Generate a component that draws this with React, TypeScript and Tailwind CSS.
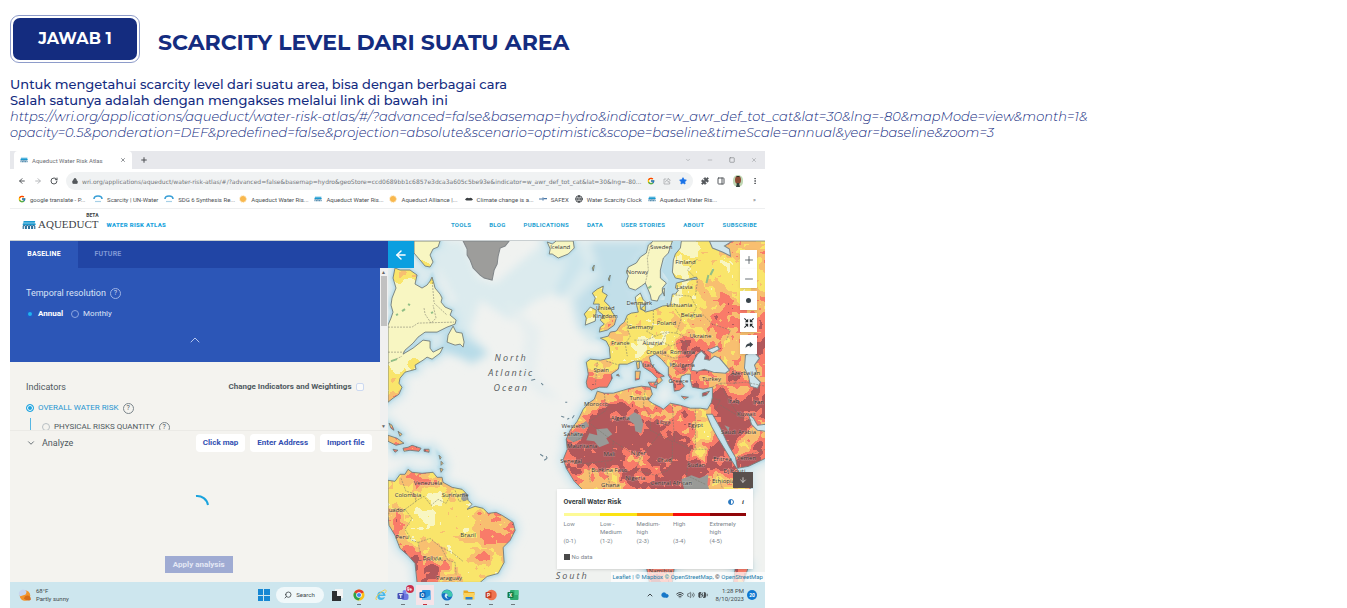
import React from "react";
import {
  ArrowLeft,
  ArrowRight,
  ChevronDown,
  ChevronUp,
  Minus,
  MoreVertical,
  Plus,
  RotateCw,
  Search,
  Square,
  Star,
  Lock,
  Puzzle,
  PanelRight,
  Wifi,
  Volume2,
  BatteryCharging,
  Cloud,
  X,
  ArrowDown,
  Globe,
} from "lucide-react";
import { FcGoogle } from "react-icons/fc";

/* ---------- Map data ---------- */

const NORTH_AMERICA =
  "M395 268L400 270L410 270L417 275L415 284L422 288L427 285L430 281L432 277L434 284L435 288L440 294L442 298L441 302L445 307L452 310L450 315L456 320L455 324L447 327L437 332L425 332L418 337L413 343L405 350L403 354L413 348L423 340L430 341L430 348L433 352L443 347L440 353L432 359L427 357L423 360L415 365L416 369L405 372L400 378L399 383L402 387L399 394L393 398L388 402L388 325L391 318L393 312L391 305L392 298L396 288L393 278Z";
const BAFFIN = "M414 241L440 241L438 247L433 249L430 255L433 262L430 267L425 266L420 260L414 253Z";
const NEWFOUNDLAND = "M453 326L456 332L462 333L464 342L463 347L460 344L455 345L447 342L448 335Z";
const GREENLAND = "M463 241L509 241L505 246L500 248L498 256L497 264L494 270L492 280L484 278L480 275L473 268L470 260L467 255L467 249Z";
const ICELAND = "M547 242L552 244L556 241L573 241L574 248L568 254L558 258L552 254L549 254L550 249Z";
const CARIBBEAN =
  "M388 435L397 438L404 443L396 445L388 441ZM403 448L408 447L412 445L421 448L419 451L410 450L404 451ZM424 449L429 449L429 452L424 451ZM393 449L398 450L395 452ZM389 423L392 425L394 430L391 428ZM398 431L402 434L400 436ZM439 455L441 457L440 459ZM441 461L443 463L441 465ZM440 468L443 469L441 472Z";
const SOUTH_AMERICA =
  "M388 480L395 481L400 474L405 474L408 469L412 472L422 473L433 472L437 477L442 477L443 482L452 487L462 489L467 494L468 500L472 504L467 509L475 506L483 508L488 513L496 512L502 515L513 522L515 530L510 540L503 547L504 562L498 573L487 576L480 582L417 582L415 563L408 555L400 548L395 535L389 525L388 515Z";
const SCANDINAVIA =
  "M653 241L648 245L646 253L640 257L636 263L628 267L626 272L628 276L626 282L629 288L635 290L641 286L645 283L648 290L650 295L651 300L657 301L659 296L662 293L662 288L666 283L660 278L660 270L663 258L668 253L672 241Z";
const AFRO_EURASIA =
  "M681 241L680 248L675 254L673 260L672 272L675 278L685 280L696 277L697 279L688 280L676 283L675 288L678 290L675 294L672 294L670 305L662 306L653 310L645 312L641 308L647 303L643 300L640 293L635 297L636 304L638 312L631 313L627 315L624 322L620 325L616 331L610 332L608 336L600 338L606 341L609 347L610 358L600 360L590 359L586 362L588 374L586 382L587 387L591 390L599 387L607 387L612 378L611 374L618 369L619 364L627 364L634 361L641 361L643 367L651 372L657 378L654 385L659 383L662 380L660 377L664 376L657 371L651 364L649 357L655 354L661 359L668 367L668 375L673 383L674 391L679 390L684 386L680 380L681 376L686 374L690 374L690 380L692 387L703 389L712 387L712 397L711 402L707 409L700 408L690 408L680 405L670 403L663 409L660 407L652 403L648 400L652 394L650 387L641 386L630 388L613 393L604 393L597 391L594 399L587 404L583 409L577 421L570 430L566 439L567 449L563 459L566 468L574 481L583 490L590 500L740 500L750 488L749 476L740 474L731 460L725 450L717 437L711 426L706 414L712 414L720 428L728 445L735 457L737 468L748 466L765 458L765 241Z";
const BRITAIN =
  "M597 289L603 286L602 292L607 295L604 301L609 306L612 312L616 318L614 325L607 330L599 332L600 327L604 324L600 320L603 315L598 311L599 304L593 304L595 298L592 293ZM590 307L596 310L595 321L585 325L586 318L584 314Z";
const ISLANDS =
  "M635 371L640 371L639 379L635 380ZM636 362L639 361L639 368L637 369ZM648 382L657 382L656 388L650 386ZM702 393L709 391L706 395L702 396ZM681 396L688 397L684 399ZM616 375L618 374L619 376ZM662 290L664 288L664 296ZM640 304L645 304L645 311L640 309ZM592 268L594 265L593 271ZM608 279L610 275L609 281Z";
const SOUTH_ATLANTIC_COASTS = "M646 566L674 566L672 582L649 582ZM735 566L748 566L743 582L733 582Z";

const LAND = [
  NORTH_AMERICA,
  BAFFIN,
  NEWFOUNDLAND,
  ICELAND,
  CARIBBEAN,
  SOUTH_AMERICA,
  SCANDINAVIA,
  AFRO_EURASIA,
  BRITAIN,
  ISLANDS,
  SOUTH_ATLANTIC_COASTS,
].join("");

const INLAND_SEAS =
  "M691 370L693 361L697 354L701 351L705 355L704 359L709 360L714 356L719 358L725 365L729 370L725 373L713 372L704 369L697 371ZM707 350L717 346L719 349L712 353ZM745 355L753 351L759 358L754 365L756 371L754 376L760 382L757 388L750 386L748 376L744 368ZM748 414L753 418L757 425L765 424L765 431L757 430L751 424ZM709 241L712 248L722 252L730 256L729 249L724 246L732 241Z";

const BORDERS =
  "M388 327L412 327L418 323L454 322M424 308L425 314L431 323L436 318L433 305M432 279L434 303L447 315M388 352L404 352M388 363L402 356M401 478L406 491L414 493L416 501L405 509L412 518L405 529L412 540L418 542L420 552M415 501L424 496L431 505L438 499L446 503L452 492M455 490L459 501L466 500M418 542L430 538L441 547L448 560L455 562L456 574M388 514L394 508L403 510M420 560L432 560L447 560M441 547L452 552L463 561M651 243L647 258L648 270L645 283M627 318L627 329L630 336L625 344L627 356M606 361L619 365M597 362L595 386M653 310L653 325L646 331L655 336L666 332L676 333L681 318L675 309M634 340L646 340L655 336M646 341L656 346L662 342L666 333M676 333L683 336L688 349L695 355M662 342L670 346L683 341M661 354L674 358L689 356M672 367L680 373L689 368M675 295L690 296L696 307L691 318L703 315L712 324L730 330L726 340M697 281L695 296M697 259L687 270L697 280M712 387L720 383L735 383L737 372L729 368M720 383L728 400L740 417L752 420M735 383L745 382L765 386M712 398L720 400L714 411M720 405L740 417M645 387L643 406L650 415L650 430L672 441L672 462M672 404L674 441L690 449L708 449M695 407L695 449M604 393L606 410L588 422L588 434L572 442M588 422L613 441L612 460L586 463L572 463M613 441L640 458L662 430M640 458L635 470L655 475L668 470L672 456M588 463L590 482M605 463L610 487M690 449L686 475L705 484M717 474L722 488M734 384L733 371M740 457L765 449";

const NO_DATA =
  "M586 440L589 433L597 435L596 429L607 428L612 434L606 438L609 443L599 447L594 441ZM567 438L575 431L583 434L581 439L573 442ZM626 418L634 412L640 415L643 424L641 433L635 431L634 424ZM681 479L691 475L699 478L708 474L707 484L710 492L684 490ZM462 493L468 492L471 498L464 501L461 499ZM579 425L586 421L589 426L583 429ZM724 425L729 427L728 431ZM669 362L673 364L670 367Z";

/* Reference stations: x, y, risk level (0 = low, 4 and above = extremely high). */
const STATIONS: number[][] = [
  [415, 300, -0.4], [435, 310, -0.4], [440, 320, -0.4], [400, 310, -0.4], [405, 330, -0.4], [405, 345, -0.3], [425, 350, -0.3],
  [390, 345, -0.3], [392, 385, 1.2], [402, 271, 1.3], [415, 271, 1.8], [409, 283, 0], [398, 300, -0.3],
  [402, 364, 0.3], [412, 366, 0.5], [390, 398, 1.8], [425, 250, -0.4], [455, 338, -0.3], [560, 248, 0],
  [395, 440, 2.2], [412, 448, 3],
  [410, 480, 1.9], [422, 476, 2.9], [436, 476, 2.2], [395, 490, 1.2], [425, 510, 0.8], [430, 496, 0.5], [450, 520, 0.9], [462, 527, 0.8],
  [440, 535, 0.9], [415, 530, 0.9], [470, 512, 1], [445, 508, 0.9], [400, 500, 1],
  [395, 512, 1.6], [391, 523, 2.9], [398, 542, 2.4], [408, 555, 3.3], [415, 575, 3.7], [430, 572, 3.6], [428, 547, 2], [436, 556, 2.1],
  [450, 575, 1.6], [472, 545, 1.2], [480, 520, 1.7], [498, 520, 2.6], [492, 534, 3], [485, 555, 2.7], [508, 526, 2.6], [497, 563, 1.1],
  [470, 570, 1], [460, 555, 1.2], [485, 572, 1.2],
  [640, 270, -0.3], [655, 255, -0.3], [652, 285, 0], [685, 262, 0.4], [690, 250, 0.2], [700, 260, 0.9], [720, 265, 1.1], [745, 270, 1.1],
  [730, 285, 1.1], [755, 250, 2], [762, 262, 1.8], [730, 246, 2.7], [680, 290, 0.5], [690, 300, 0.9], [706, 290, 1.9], [712, 300, 1.9],
  [722, 320, 2.8], [745, 295, 1.3], [735, 315, 2.8], [750, 330, 2.7], [760, 350, 3.6], [704, 320, 1.9], [690, 325, 1.5], [665, 318, 1.3],
  [645, 325, 0.9], [632, 320, 0.8], [660, 337, 0.6], [635, 348, 0.5], [645, 345, 0.5], [623, 328, 1.9], [615, 350, 1.3], [620, 357, 0.7],
  [600, 368, 1.2], [605, 380, 2.8], [592, 378, 2.7], [594, 365, 1],
  [645, 367, 2.6], [655, 374, 2.9], [670, 357, 1.2], [685, 350, 3], [680, 365, 3], [677, 382, 3], [700, 380, 3.1],
  [715, 378, 2.4], [730, 350, 2.1], [740, 365, 1.9], [735, 382, 3], [720, 396, 4.2], [728, 405, 4.3], [740, 408, 4.3], [755, 397, 3.6],
  [732, 390, 2.6], [603, 310, 0.8], [613, 321, 2.3], [590, 316, 0.4],
  [594, 402, 2.1], [610, 396, 1.9], [625, 393, 1.9], [645, 400, 1.8], [579, 417, 1.9],
  [600, 413, 4.4], [615, 407, 3.7], [632, 415, 4.1], [595, 430, 4.5], [595, 450, 4.5], [575, 448, 4.4], [615, 436, 4.5], [632, 440, 4.5],
  [648, 422, 3.1], [660, 412, 3], [664, 426, 3.5], [682, 415, 3], [685, 428, 3.1], [696, 415, 3], [653, 437, 4.3], [670, 448, 4.6],
  [702, 438, 1.2], [704, 427, 1], [698, 411, 2], [685, 445, 4.5], [650, 452, 4.4], [667, 464, 3.6], [690, 462, 4.3], [712, 450, 4.5],
  [718, 462, 4.2], [712, 474, 3], [720, 485, 2], [733, 485, 1.7], [702, 450, 2], [645, 457, 3], [630, 468, 3.3], [610, 460, 4.4],
  [610, 476, 2.1], [590, 477, 2], [575, 463, 3.8], [635, 478, 3.2], [650, 478, 3.6], [665, 478, 3.9], [675, 468, 4.3],
  [724, 428, 4.5], [730, 440, 4.1], [742, 443, 1.6], [752, 437, 1.5], [742, 425, 4], [757, 447, 3.2], [745, 460, 4.3], [739, 452, 2.6],
  [660, 575, 3], [740, 575, 3],
];

const RISK_COLOURS = ["#f8f6c2", "#f9e56b", "#f8bf70", "#f97b69", "#b2585b"];

function hash(x: number, y: number) {
  const s = Math.sin(x * 127.1 + y * 311.7) * 43758.5453;
  return s - Math.floor(s);
}

function noise(x: number, y: number, size: number) {
  const gx = Math.floor(x / size);
  const gy = Math.floor(y / size);
  const fx = x / size - gx;
  const fy = y / size - gy;
  const top = hash(gx, gy) * (1 - fx) + hash(gx + 1, gy) * fx;
  const bottom = hash(gx, gy + 1) * (1 - fx) + hash(gx + 1, gy + 1) * fx;
  return top * (1 - fy) + bottom * fy - 0.5;
}

function riskLevel(x: number, y: number) {
  let total = 0;
  let weight = 0;
  for (const [sx, sy, level] of STATIONS) {
    const d = (sx - x) ** 2 + (sy - y) ** 2 + 8;
    const w = 1 / (d * d);
    total += w * level;
    weight += w;
  }
  const base = total / weight;
  const rough = base < 0.3 ? 0.4 : base < 1.3 ? 0.8 : 1.3;
  const value = base + rough * (noise(x, y, 9) * 1.4 + noise(x + 900, y, 4) * 1.4);
  return Math.max(0, Math.min(4, Math.round(value)));
}

function buildRiskPaths() {
  const paths = ["", "", "", "", ""];
  const cell = 1;
  for (let y = 241; y < 583; y += cell) {
    let start = 388;
    let current = riskLevel(start, y);
    for (let x = 388 + cell; x <= 766; x += cell) {
      const next = x >= 766 ? -1 : riskLevel(x, y);
      if (next !== current) {
        paths[current] += `M${start} ${y}H${x}V${y + cell}H${start}Z`;
        start = x;
        current = next;
      }
    }
  }
  return paths;
}

const RISK_PATHS = buildRiskPaths();

const PLACES: [string, number, number][] = [
  ["Iceland", 560, 249], ["Sweden", 661, 249], ["Finland", 685, 264], ["Norway", 637, 274], ["Denmark", 639, 305],
  ["Latvia", 684, 289], ["Lithuania", 679, 307], ["Belarus", 691, 317], ["United", 605, 310], ["Kingdom", 605, 318],
  ["Germany", 640, 329], ["Poland", 666, 325], ["Ukraine", 700, 338], ["France", 620, 345], ["Austria", 652, 345],
  ["Croatia", 656, 354], ["Romania", 682, 354], ["Bulgaria", 683, 367], ["Italy", 648, 367], ["Spain", 601, 372],
  ["Greece", 678, 383], ["Turkey", 711, 381], ["Azerbaijan", 745, 375], ["Morocco", 596, 406], ["Tunisia", 639, 400],
  ["Algeria", 620, 420], ["Libya", 663, 424], ["Egypt", 695, 427], ["Iraq", 733, 403], ["Kuwait", 746, 416],
  ["Saudi Arabia", 738, 434], ["Western", 573, 428], ["Sahara", 573, 436], ["Mauritania", 582, 448], ["Mali", 609, 456],
  ["Niger", 638, 455], ["Chad", 664, 462], ["Sudan", 696, 467], ["Eritrea", 722, 461], ["Yemen", 746, 460],
  ["Senegal", 571, 463], ["Burkina Faso", 609, 472], ["Nigeria", 635, 480], ["Ghana", 610, 487], ["Central African", 671, 485],
  ["Djibouti", 734, 473], ["Ethiopia", 723, 483], ["Venezuela", 428, 485], ["Colombia", 408, 497], ["Suriname", 455, 497],
  ["uador", 397, 512], ["Brazil", 468, 537], ["Peru", 402, 539], ["Bolivia", 432, 560], ["Paraguay", 449, 580],
  ["Namibia", 660, 573], ["Iran", 758, 404],
];

function RiskMap() {
  return (
    <svg
      className="absolute inset-0 h-full w-full"
      viewBox="388 241 377 341"
      preserveAspectRatio="xMinYMin slice"
      role="img"
      aria-label="Overall water risk map"
    >
      <defs>
        <clipPath id="land">
          <path d={LAND} />
        </clipPath>
        <filter id="shelf" x="-10%" y="-10%" width="120%" height="120%">
          <feGaussianBlur stdDeviation="4" />
        </filter>
        <filter id="coast" x="-10%" y="-10%" width="120%" height="120%">
          <feGaussianBlur stdDeviation="1" />
        </filter>
      </defs>
      <rect x="388" y="241" width="377" height="341" fill="#f0f2f0" />
      <g filter="url(#shelf)">
        <path d="M440 241L463 241L478 278L495 284L520 262L545 241L625 241L625 300L590 345L575 325L565 290L535 300L510 320L480 300L470 330L490 355L470 366L445 340L455 300L438 270Z" fill="#dcebee" />
        <path d={LAND} fill="none" stroke="#cfe6ed" strokeWidth="10" />
        <path d="M590 241L650 241L625 275L640 310L606 338L580 325L575 300L600 275Z" fill="#c2dfe9" />
        <path d="M445 325L488 352L473 362L440 350Z" fill="#b7dbe8" />
        <path d="M575 245L585 262L560 300L555 290Z" fill="#cbe4ec" />
        <path d="M505 300L540 330L535 375L560 400L540 395L520 375L525 335Z" fill="#e6eeef" />
      </g>
      <path d="M650 310L650 300L664 300L668 280L661 270L672 240L684 240L674 262L675 278L700 277L676 285L670 307Z" fill="#b9dce8" />
      <path d={LAND} fill="none" stroke="#b9dce8" strokeWidth="4" filter="url(#coast)" />
      <path d={GREENLAND} fill="#9d9d9b" stroke="#808588" />
      <g clipPath="url(#land)">
        {RISK_PATHS.map((d, i) => (
          <path key={RISK_COLOURS[i]} d={d} fill={RISK_COLOURS[i]} shapeRendering="crispEdges" />
        ))}
        <path d={NO_DATA} fill="#999a97" />
        <path d={INLAND_SEAS} fill="#cfe5ec" stroke="#7d8a8c" />
        <path d={BORDERS} fill="none" stroke="#77766a" strokeWidth="0.7" strokeDasharray="2 1" opacity="0.75" />
      </g>
      <path d="M402 311l3-2M396 315l2-1M431 313l2-1M408 304l2 1M648 288l3-2M710 275l3-6M706 283l2-8M391 361l6-2" stroke="#91be86" strokeWidth="2" />
      <path d={LAND} fill="none" stroke="#747d7b" strokeWidth="0.9" strokeLinejoin="round" />
      <path d="M561 416l3 1M567 419l2-1M572 418l2-3M531 380l4-1M541 383l2 2M565 402l2 0M540 454l3 2M544 460l3-2M546 456l1 2" stroke="#6a8492" />
      <g fontFamily="'Open Sans', sans-serif" fontSize="6" fill="#35352f" textAnchor="middle">
        {PLACES.map(([name, x, y]) => (
          <text key={name} x={x} y={y} stroke="#ffffff" strokeOpacity="0.25" strokeWidth="1" paintOrder="stroke">
            {name}
          </text>
        ))}
      </g>
      <g fontFamily="'Open Sans', sans-serif" fontSize="9" fontStyle="italic" fill="#55585a" textAnchor="middle" letterSpacing="2">
        <text x="511" y="361">North</text>
        <text x="511" y="376">Atlantic</text>
        <text x="511" y="391">Ocean</text>
        <text x="572" y="579">South</text>
      </g>
    </svg>
  );
}

/* ---------- Small drawings ---------- */

function AqueductMark({ className }: { className: string }) {
  return (
    <svg viewBox="0 0 16 9" className={className} aria-hidden="true">
      <path d="M2 0H15L14.500 2H1.500ZM1.200 2.400H15.200L15.500 4.500H.8Z" fill="#1b9bd1" />
      <path d="M1.500 9V6Q2.500 3.500 4 6V9M5 9V6Q6 3.500 7.500 6V9M8.500 9V6Q9.500 3.500 11 6V9M12 9V6Q13 3.500 14.500 6V9" fill="none" stroke="#2a6f9b" strokeWidth="1.300" />
    </svg>
  );
}

function UnWaterMark() {
  return (
    <svg viewBox="0 0 10 8" className="h-2 w-2.5 shrink-0" aria-hidden="true">
      <path d="M1 4Q1 1 5 1T9 4" fill="none" stroke="#3a9fd6" strokeWidth="1.600" />
      <path d="M2 6.500H8" stroke="#a6cfe6" strokeWidth="1.200" />
    </svg>
  );
}

function SunMark() {
  return (
    <svg viewBox="0 0 10 10" className="h-2 w-2 shrink-0" aria-hidden="true">
      <circle cx="5" cy="5" r="3.800" fill="#f9b84d" />
      <circle cx="5" cy="5" r="4.300" fill="none" stroke="#fbd48f" strokeDasharray="1.500 1" />
    </svg>
  );
}

function DashMark({ tone }: { tone: "dark" | "blue" }) {
  return (
    <svg viewBox="0 0 10 6" className="h-1.5 w-2 shrink-0" aria-hidden="true">
      {tone === "dark" ? (
        <path d="M0 4Q2 0 5 2Q8 0 10 4L8 5H2Z" fill="#3b3f42" />
      ) : (
        <path d="M0 3H4M5 1V5M6 2.500H10" stroke="#4a78a8" strokeWidth="1.500" />
      )}
    </svg>
  );
}

function HelpIcon({ light = false }: { light?: boolean }) {
  return (
    <span
      className={
        light
          ? "flex h-[11px] w-[11px] items-center justify-center rounded-full border border-[#9db2e4] text-[7px] leading-none text-[#d3dcf4]"
          : "flex h-[11px] w-[11px] items-center justify-center rounded-full border border-[#7c868c] text-[7px] leading-none text-[#4a545a]"
      }
    >
      ?
    </span>
  );
}

function ChromeIcon() {
  return (
    <svg viewBox="0 0 24 24" className="h-3 w-3" aria-hidden="true">
      <circle cx="12" cy="12" r="11" fill="#fbc116" />
      <path d="M12 12L2.500 6.500A11 11 0 0 1 21.500 6.500Z" fill="#e33b2e" />
      <path d="M12 12L2.500 6.500A11 11 0 0 0 11 23L16.500 14.500Z" fill="#2ba24c" />
      <circle cx="12" cy="12" r="5.500" fill="#fff" />
      <circle cx="12" cy="12" r="4.200" fill="#4285f4" />
    </svg>
  );
}

function ExplorerIcon() {
  return (
    <svg viewBox="0 0 24 24" className="h-3 w-3" aria-hidden="true">
      <path d="M21 14H9Q9.500 17.500 13 17.500T20 16Q18 22 12.500 22Q4.500 22 4.500 13.500T12.500 5Q21 5.500 21 14ZM9 11H16.500Q16 8.500 12.800 8.500T9 11Z" fill="#49b7e8" fillRule="evenodd" />
      <path d="M3 22Q-1 17 10 8T22 3Q23 5 20 8" fill="none" stroke="#f0cb4d" strokeWidth="2" />
    </svg>
  );
}

function TeamsIcon() {
  return (
    <span className="relative">
      <svg viewBox="0 0 24 24" className="h-3 w-3.5" aria-hidden="true">
        <circle cx="15" cy="6" r="4" fill="#7b83eb" />
        <rect x="9" y="9" width="14" height="13" rx="4" fill="#6c74df" />
        <rect x="1" y="8" width="13" height="12" rx="2" fill="#4651b8" />
        <path d="M4 11.500H11M7.500 11.500V18" stroke="#fff" strokeWidth="2" />
      </svg>
      <span className="absolute -right-1 -top-1 flex h-2 w-2 items-center justify-center rounded-full bg-[#c9304e] text-[5px] font-bold leading-none text-white">
        9+
      </span>
    </span>
  );
}

function OfficeIcon({ letter, kind }: { letter: string; kind: "outlook" | "powerpoint" | "excel" }) {
  const tones = {
    outlook: ["#2492e0", "#0f64b8"],
    powerpoint: ["#ee7450", "#c64023"],
    excel: ["#2fab70", "#107a43"],
  };
  const [light, dark] = tones[kind];
  return (
    <svg viewBox="0 0 24 24" className="h-3 w-3" aria-hidden="true">
      {kind === "powerpoint" ? <circle cx="13" cy="12" r="10.500" fill={light} /> : <rect x="6" y="2" width="17" height="20" rx="2" fill={light} />}
      {kind === "outlook" && <path d="M6 13L14 18L23 12V22H6Z" fill="#63c0f2" />}
      {kind === "excel" && <path d="M15 2H23V12H15Z" fill="#46c58a" />}
      <rect x="1" y="6" width="12" height="12" rx="1.500" fill={dark} />
      <text x="7" y="15.500" fontSize="10" fontWeight="700" fill="#fff" textAnchor="middle" fontFamily="Roboto, sans-serif">
        {letter}
      </text>
    </svg>
  );
}

function EdgeIcon() {
  return (
    <svg viewBox="0 0 24 24" className="h-3 w-3" aria-hidden="true">
      <circle cx="12" cy="12" r="11" fill="#1670c4" />
      <path d="M1.500 10A11 11 0 0 1 23 12Q23 16 18 16T14 13Q14 8 9 8T1.500 10Z" fill="#3fc6b0" />
      <path d="M9 9Q6 13 9 17T20 19Q14 21 12 17T14 13Q13 8 9 9Z" fill="#d5edf3" />
    </svg>
  );
}

function FolderIcon() {
  return (
    <svg viewBox="0 0 24 24" className="h-3 w-3" aria-hidden="true">
      <path d="M1 3H9L11 6H23V12H1Z" fill="#e9a820" />
      <rect x="1" y="8" width="22" height="13" rx="1" fill="#fbd25c" />
      <path d="M5 16H19V21H5Z" fill="#2d83cf" />
    </svg>
  );
}

/* ---------- Browser chrome ---------- */

function TabStrip() {
  return (
    <div className="flex h-[18px] items-center bg-[#e7e8ec] pl-1 pr-2 text-[#6c7075]">
      <div className="flex h-full w-[118px] items-center gap-1 rounded-t bg-white px-1.5">
        <AqueductMark className="h-1.5 w-2 shrink-0" />
        <span className="flex-1 whitespace-nowrap font-['Roboto',sans-serif] text-[6px]">Aqueduct Water Risk Atlas</span>
        <button type="button" aria-label="Close tab">
          <X className="h-1.5 w-1.5" strokeWidth={3} />
        </button>
      </div>
      <button type="button" aria-label="New tab" className="ml-2">
        <Plus className="h-2 w-2 text-[#4a4d50]" strokeWidth={3} />
      </button>
      <div className="ml-auto flex items-center gap-4 text-[#8b8e92]">
        <ChevronDown className="h-1.5 w-1.5" />
        <Minus className="h-1.5 w-1.5" />
        <Square className="h-1.5 w-1.5" strokeWidth={3} />
        <X className="h-1.5 w-1.5" />
      </div>
    </div>
  );
}

const ADDRESS =
  "wri.org/applications/aqueduct/water-risk-atlas/#/?advanced=false&basemap=hydro&geoStore=ccd0689bb1c6857e3dca3a605c5be93e&indicator=w_awr_def_tot_cat&lat=30&lng=-80...";

function AddressRow() {
  return (
    <div className="flex h-6 items-center bg-white pl-2 pr-1.5 text-[#54585c]">
      <div className="flex items-center gap-2">
        <button type="button" aria-label="Back"><ArrowLeft className="h-2 w-2" strokeWidth={3} /></button>
        <button type="button" aria-label="Forward"><ArrowRight className="h-2 w-2 text-[#b6b8bb]" strokeWidth={3} /></button>
        <button type="button" aria-label="Reload"><RotateCw className="h-2 w-2" strokeWidth={3} /></button>
      </div>
      <div className="ml-2 flex h-[18px] min-w-0 flex-1 items-center gap-1 rounded-full bg-[#f0f2f3] px-1.5">
        <Lock className="h-1.5 w-1.5 shrink-0 fill-current" strokeWidth={3} />
        <input
          aria-label="Address"
          defaultValue={ADDRESS}
          className="min-w-0 flex-1 bg-transparent font-['DejaVu_Sans',sans-serif] text-[6px] text-[#73777b] outline-none"
        />
        <FcGoogle className="h-2 w-2 shrink-0" />
        <svg viewBox="0 0 24 24" className="ml-1 h-2 w-2 shrink-0" fill="none" stroke="#9a9da0" strokeWidth="2" aria-hidden="true">
          <path d="M10 6H3V21H20V15M7 16Q8 9 15 9V4L22 10L15 16V12" />
        </svg>
        <Star className="ml-1 h-2 w-2 shrink-0 fill-[#1a73e8] text-[#1a73e8]" />
      </div>
      <div className="ml-2 flex items-center gap-2">
        <Puzzle className="h-2 w-2 fill-current" />
        <PanelRight className="h-2 w-2" strokeWidth={3} />
        <svg viewBox="0 0 10 12" className="h-3 w-2.5" aria-hidden="true">
          <rect width="10" height="12" rx="5" fill="#bfd7b4" />
          <ellipse cx="5" cy="5" rx="3" ry="4" fill="#8b4a34" />
          <path d="M2 3Q5 -1 8 3L7 2H3Z" fill="#252422" />
          <path d="M3 12L4 8H6L7 12Z" fill="#33423d" />
        </svg>
        <MoreVertical className="h-2 w-2" strokeWidth={3} />
      </div>
    </div>
  );
}

const BOOKMARKS: { label: string; icon: React.ReactNode }[] = [
  { label: "google translate - P...", icon: <FcGoogle className="h-2 w-2 shrink-0" /> },
  { label: "Scarcity | UN-Water", icon: <UnWaterMark /> },
  { label: "SDG 6 Synthesis Re...", icon: <UnWaterMark /> },
  { label: "Aqueduct Water Ris...", icon: <SunMark /> },
  { label: "Aqueduct Water Ris...", icon: <AqueductMark className="h-1.5 w-2 shrink-0" /> },
  { label: "Aqueduct Alliance |...", icon: <SunMark /> },
  { label: "Climate change is a...", icon: <DashMark tone="dark" /> },
  { label: "SAFEX", icon: <DashMark tone="blue" /> },
  { label: "Water Scarcity Clock", icon: <Globe className="h-2 w-2 shrink-0" strokeWidth={3} /> },
  { label: "Aqueduct Water Ris...", icon: <AqueductMark className="h-1.5 w-2 shrink-0" /> },
];

function BookmarkRow() {
  return (
    <nav
      aria-label="Bookmarks"
      className="grid h-4 grid-cols-[75fr_71fr_75fr_75fr_75fr_75fr_74fr_36fr_73fr_105fr_8fr] items-center border-b border-[#eeeff0] bg-white pb-1 pl-2 pr-1 pt-px font-['Roboto',sans-serif] text-[6px] text-[#4c5054]"
    >
      {BOOKMARKS.map((b, i) => (
        <a key={i} href="#bookmark" className="flex items-center gap-1 whitespace-nowrap">
          {b.icon}
          {b.label}
        </a>
      ))}
      <span>»</span>
    </nav>
  );
}

/* ---------- Aqueduct application ---------- */

const MENU = ["TOOLS", "BLOG", "PUBLICATIONS", "DATA", "USER STORIES", "ABOUT", "SUBSCRIBE"];

function SiteHeader() {
  return (
    <header className="flex h-8 items-center border-b border-[#c9cfd1] bg-white pl-[11px] pr-2">
      <AqueductMark className="h-2 w-4" />
      <span className="relative ml-px font-['Liberation_Serif',serif] text-[11px] leading-none text-[#3d4347]">
        AQUEDUCT
        <span className="absolute -top-1.5 right-0 font-['Roboto',sans-serif] text-[5px] font-bold leading-none">BETA</span>
      </span>
      <span className="ml-2 font-['Roboto',sans-serif] text-[6px] font-black tracking-wider text-[#1aa3dd]">WATER RISK ATLAS</span>
      <nav aria-label="Site" className="ml-auto flex gap-[18px] font-['Roboto',sans-serif] text-[6px] font-bold tracking-wider text-[#249fd2]">
        {MENU.map((m) => (
          <a key={m} href="#menu">{m}</a>
        ))}
      </nav>
    </header>
  );
}

function Sidebar() {
  return (
    <section className="flex w-1/2 flex-col bg-[#f4f3ef] font-['Roboto',sans-serif] text-[#4f5960]">
      <div className="flex h-[27px] bg-[#2145a5] text-[7px] font-bold tracking-wide">
        <button type="button" className="w-[68px] bg-[#2c56b7] text-white">BASELINE</button>
        <button type="button" className="w-[60px] text-[#7f98d5]">FUTURE</button>
      </div>
      <div className="flex h-[162px]">
        <div className="flex min-w-0 flex-1 flex-col overflow-hidden">
          <div className="flex h-[94px] shrink-0 flex-col bg-[#2c56b7] px-4 pt-[19px] text-[#dbe3f6]">
            <div className="flex items-center gap-1 text-[9px] leading-3">
              Temporal resolution <HelpIcon light />
            </div>
            <div className="mt-[9px] flex gap-2 text-[8px] leading-3">
              <label className="flex items-center gap-1 font-bold text-white">
                <input type="radio" name="resolution" defaultChecked className="h-2 w-2 appearance-none rounded-full border-2 border-[#2459c2] bg-[#20b4ef]" />
                Annual
              </label>
              <label className="flex items-center gap-1">
                <input type="radio" name="resolution" className="h-2 w-2 appearance-none rounded-full border border-[#8ba5e0]" />
                Monthly
              </label>
            </div>
            <button type="button" aria-label="Collapse" className="mx-auto mt-3">
              <ChevronUp className="h-4 w-4 text-[#b4c5ee]" strokeWidth={1.500} />
            </button>
          </div>
          <div className="flex flex-col px-4 pt-[19px]">
            <div className="flex items-center justify-between text-[9px] leading-3">
              <h2>Indicators</h2>
              <label className="flex items-center gap-1 text-[8px] font-bold">
                Change Indicators and Weightings
                <input type="checkbox" className="h-2 w-2 appearance-none rounded-[2px] border border-[#ccd9f1] bg-[#fafaf9]" />
              </label>
            </div>
            <div className="mt-[9px] flex items-center gap-1 text-[8px] leading-3 text-[#2796d1]">
              <label className="flex items-center gap-1">
                <input type="radio" name="indicator" defaultChecked className="h-2 w-2 appearance-none rounded-full border border-[#20a4df] bg-[#20a4df] shadow-[inset_0_0_0_1px_#fff]" />
                OVERALL WATER RISK
              </label>
              <HelpIcon />
            </div>
            <div className="ml-1 mt-1 flex items-center gap-1 border-l border-[#56b6e3] pl-[11px] pt-[3px] text-[8px] leading-3">
              <label className="flex items-center gap-1">
                <input type="radio" name="indicator" className="h-2 w-2 appearance-none rounded-full border border-[#b8bfc3]" />
                PHYSICAL RISKS QUANTITY
              </label>
              <HelpIcon />
            </div>
          </div>
        </div>
        <div className="flex w-2 flex-col items-center justify-between bg-[#f0f0f0] text-[5px] leading-[8px] text-[#666]">
          <span>▲</span>
          <span className="mb-auto h-[50px] w-1.5 bg-[#c1c1c1]" />
          <span>▼</span>
        </div>
      </div>
      <div className="flex flex-1 flex-col border-t border-[#ebeae6] px-4 pb-[9px] pt-[3px]">
        <div className="flex items-center">
          <ChevronDown className="h-2.5 w-2.5" />
          <h2 className="ml-1.5 text-[9px] leading-[18px]">Analyze</h2>
          <div className="ml-auto flex gap-[5px] text-[8px] font-bold leading-[18px] text-[#3350b2]">
            <button type="button" className="rounded-sm bg-white px-[7px]">Click map</button>
            <button type="button" className="rounded-sm bg-white px-[7px]">Enter Address</button>
            <button type="button" className="rounded-sm bg-white px-[7px]">Import file</button>
          </div>
        </div>
        <div className="flex flex-1 items-center justify-center">
          <svg viewBox="0 0 24 24" className="h-6 w-6" aria-hidden="true">
            <path d="M9 4A11 11 0 0 1 21 13" fill="none" stroke="#1aa3dd" strokeWidth="2" />
          </svg>
        </div>
        <button type="button" className="mx-auto bg-[#9fabd3] px-2 text-[8px] font-bold leading-[17px] text-[#e4e8f5]">
          Apply analysis
        </button>
      </div>
    </section>
  );
}

const LEGEND = [
  { name: "Low", range: "(0-1)", bar: "bg-[#fdfa96]" },
  { name: "Low - Medium", range: "(1-2)", bar: "bg-[#fbe313]" },
  { name: "Medium-high", range: "(2-3)", bar: "bg-[#fb9610]" },
  { name: "High", range: "(3-4)", bar: "bg-[#f50f0d]" },
  { name: "Extremely high", range: "(4-5)", bar: "bg-[#900508]" },
];

function Legend() {
  return (
    <div className="absolute bottom-[13px] left-[169px] right-3 bg-white px-[7px] pb-2 pt-2 font-['Roboto',sans-serif] text-[6px] leading-[8px] text-[#7d868d] shadow">
      <div className="flex items-center text-[7px] font-bold leading-[10px] text-[#363d42]">
        Overall Water Risk
        <span className="ml-auto mr-2 h-1.5 w-1.5 rounded-full border border-[#2a78c0] bg-gradient-to-r from-[#2a78c0] from-50% to-white to-50%" />
        <span className="mr-0.5 font-['Liberation_Serif',serif] italic">i</span>
      </div>
      <div className="mt-1.5 grid grid-cols-5">
        {LEGEND.map((l) => (
          <div key={l.name} className="flex h-8 flex-col">
            <div className={`mb-1 h-[3px] shrink-0 ${l.bar}`} />
            <span className="w-8">{l.name.startsWith("Medium") ? <>Medium-<br />high</> : l.name}</span>
            <span className="mt-auto leading-[8px]">{l.range}</span>
          </div>
        ))}
      </div>
      <div className="mt-2 flex items-center gap-0.5">
        <span className="h-1.5 w-1.5 bg-[#4a4a4a]" />
        No data
      </div>
    </div>
  );
}

function MapPane() {
  const tool = "flex h-[19px] w-[17px] items-center justify-center bg-white text-[#39444b] shadow-sm";
  return (
    <section className="relative w-1/2 overflow-hidden">
      <RiskMap />
      <button type="button" aria-label="Hide panel" className="absolute left-0 top-0 flex h-[27px] w-[26px] items-center justify-center bg-[#0b9fe0] text-white">
        <ArrowLeft className="h-3.5 w-3.5" strokeWidth={2.500} />
      </button>
      <div className="absolute right-2 top-[9px] flex flex-col gap-[3px]">
        <div className="flex flex-col">
          <button type="button" aria-label="Zoom in" className={tool}><Plus className="h-3 w-3" strokeWidth={1.500} /></button>
          <button type="button" aria-label="Zoom out" className={tool}><Minus className="h-3 w-3" strokeWidth={1.500} /></button>
        </div>
        <button type="button" aria-label="Basemap" className={tool}><span className="h-[5px] w-[5px] rounded-full bg-current" /></button>
        <button type="button" aria-label="Fullscreen" className={tool}>
          <svg viewBox="0 0 24 24" className="h-2.5 w-2.5" aria-hidden="true">
            <path d="M10 2V10H2ZM22 14H14V22ZM14 2V10H22ZM2 14H10V22Z" fill="#22282c" />
            <path d="M1 1L8 8M23 23L16 16M23 1L16 8M1 23L8 16" stroke="#22282c" strokeWidth="2.500" />
          </svg>
        </button>
        <button type="button" aria-label="Share" className={tool}>
          <svg viewBox="0 0 12 12" className="h-2.5 w-2.5" aria-hidden="true">
            <path d="M7 2L11 5.500L7 9V7Q3 7 2 10Q1.500 4.500 7 4Z" fill="currentColor" />
          </svg>
        </button>
      </div>
      <button type="button" aria-label="Collapse legend" className="absolute bottom-[94px] right-3 flex h-4 w-5 items-center justify-center bg-[#59504d] text-[#c9c6c4]">
        <ArrowDown className="h-2 w-2" strokeWidth={3} />
      </button>
      <Legend />
      <div className="absolute bottom-0 right-0 whitespace-nowrap bg-white/70 px-0.5 font-['Roboto',sans-serif] text-[6px] leading-[10px] text-[#2680ab]">
        <a href="#leaflet">Leaflet</a> | <a href="#mapbox">© Mapbox</a> <a href="#osm">© OpenStreetMap</a>, <span className="text-[#333]">©</span> <a href="#osm2">OpenStreetMap</a>
      </div>
    </section>
  );
}

function TaskApp({ children, active = false, running = false }: { children: React.ReactNode; active?: boolean; running?: boolean }) {
  return (
    <span className={`relative flex h-5 w-[18px] items-center justify-center ${active ? "bg-[#f6e3e8]" : ""}`}>
      {children}
      {running && <span className={`absolute bottom-0 h-px w-1 ${active ? "bg-[#c5303c]" : "bg-[#70797d]"}`} />}
    </span>
  );
}

function Taskbar() {
  return (
    <footer className="flex h-[26px] items-center bg-[#cde6ee] px-2 font-['Roboto',sans-serif] text-[6px] leading-[8px] text-[#41484c]">
      <div className="flex flex-1 items-center gap-1">
        <svg viewBox="0 0 24 24" className="h-3.5 w-3.5" aria-hidden="true">
          <circle cx="12" cy="13" r="9" fill="#f2932b" />
          <path d="M2 7Q5 1 11 3T13 11L4 14Q0 11 2 7Z" fill="#c6d4ef" />
          <path d="M10 18Q12 12 17 13T22 20Q16 24 10 18Z" fill="#d66d1a" />
        </svg>
        <span>68°F<br />Partly sunny</span>
      </div>
      <div className="flex items-center gap-1 pl-1">
        <span className="mr-0.5 grid h-3 w-3 grid-cols-2 gap-px">
          <span className="bg-[#1687d3]" /><span className="bg-[#1687d3]" /><span className="bg-[#1687d3]" /><span className="bg-[#1687d3]" />
        </span>
        <button type="button" className="flex h-4 w-12 items-center justify-center gap-1 rounded-full bg-[#f0f8fa]">
          <Search className="h-2 w-2 -scale-x-100" strokeWidth={2.500} />
          Search
        </button>
        <TaskApp>
          <svg viewBox="0 0 12 12" className="h-3 w-3" aria-hidden="true">
            <rect x="4" width="8" height="9" fill="#f3f4f4" />
            <path d="M1 2H6V7H10V12H1Z" fill="#2c2f31" />
          </svg>
        </TaskApp>
        <TaskApp running><ChromeIcon /></TaskApp>
        <TaskApp><ExplorerIcon /></TaskApp>
        <TaskApp running><TeamsIcon /></TaskApp>
        <TaskApp running active><OfficeIcon letter="O" kind="outlook" /></TaskApp>
        <TaskApp running><EdgeIcon /></TaskApp>
        <TaskApp running><FolderIcon /></TaskApp>
        <TaskApp running><OfficeIcon letter="P" kind="powerpoint" /></TaskApp>
        <TaskApp running><OfficeIcon letter="X" kind="excel" /></TaskApp>
      </div>
      <div className="flex flex-1 items-center justify-end gap-[3px]">
        <ChevronUp className="mr-1 h-2 w-2" strokeWidth={3} />
        <Cloud className="mr-1 h-2 w-2 fill-[#1677c8] text-[#1677c8]" />
        <Wifi className="h-2 w-2" strokeWidth={3} />
        <Volume2 className="h-2 w-2" />
        <BatteryCharging className="mr-1 h-2.5 w-2.5 fill-current" />
        <span className="text-right">1:28 PM<br />8/10/2023</span>
        <span className="flex h-2.5 w-2.5 items-center justify-center rounded-full bg-[#0f78d1] text-[5px] font-bold leading-none text-white">20</span>
      </div>
    </footer>
  );
}

export default function App() {
  return (
    <main className="min-h-screen bg-white pl-[10px] font-[Montserrat,Inter,sans-serif] text-[#142c7f]">
      <div className="flex items-center gap-[18px] pt-[15px]">
        <div className="rounded-[9px] border border-[#8e9cca] p-[2px]">
          <div className="flex h-[42px] w-[124px] items-center justify-center rounded-[7px] bg-[#142c7f] text-[16px] font-bold text-white">
            JAWAB 1
          </div>
        </div>
        <h1 className="pt-[7px] text-[22px] font-bold leading-7">SCARCITY LEVEL DARI SUATU AREA</h1>
      </div>
      <div className="pt-[13px] text-[13px] leading-4">
        <p className="font-medium">Untuk mengetahui scarcity level dari suatu area, bisa dengan berbagai cara</p>
        <p className="font-medium">Salah satunya adalah dengan mengakses melalui link di bawah ini</p>
        <a
          className="block font-light italic"
          href="https://wri.org/applications/aqueduct/water-risk-atlas/#/?advanced=false&basemap=hydro&indicator=w_awr_def_tot_cat&lat=30&lng=-80&mapMode=view&month=1&opacity=0.5&ponderation=DEF&predefined=false&projection=absolute&scenario=optimistic&scope=baseline&timeScale=annual&year=baseline&zoom=3"
        >
          https://wri.org/applications/aqueduct/water-risk-atlas/#/?advanced=false&amp;basemap=hydro&amp;indicator=w_awr_def_tot_cat&amp;lat=30&amp;lng=-80&amp;mapMode=view&amp;month=1&amp;
          <br />
          opacity=0.5&amp;ponderation=DEF&amp;predefined=false&amp;projection=absolute&amp;scenario=optimistic&amp;scope=baseline&amp;timeScale=annual&amp;year=baseline&amp;zoom=3
        </a>
      </div>
      <div className="mt-[11px] w-full max-w-[755px]">
        <TabStrip />
        <AddressRow />
        <BookmarkRow />
        <SiteHeader />
        <div className="flex h-[341px]">
          <Sidebar />
          <MapPane />
        </div>
        <Taskbar />
      </div>
    </main>
  );
}
